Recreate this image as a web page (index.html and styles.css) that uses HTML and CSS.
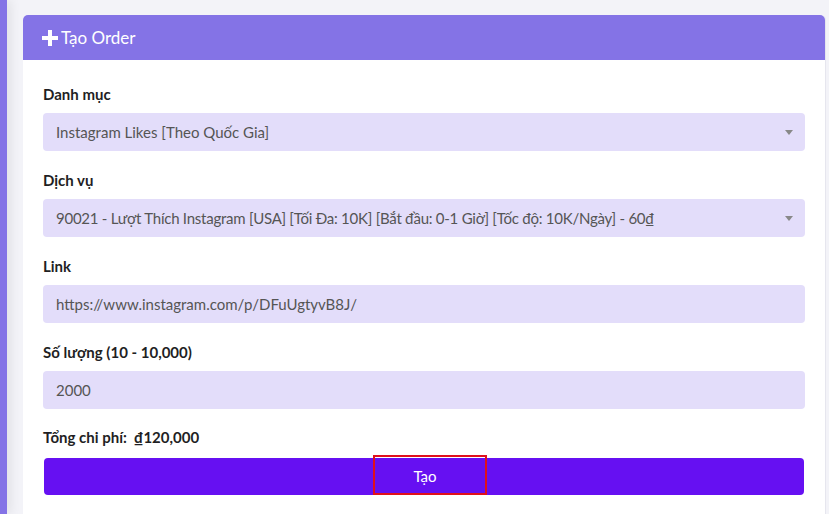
FILE: index.html
```html
<!DOCTYPE html>
<html>
	<head>
		<meta charset="utf-8">
		<title>Tạo Order</title>
		<link rel="stylesheet" href="styles.css">
	</head>
	<body>
		<div class="wrap">
			<div class="sidebar"></div>
			<div class="main">
				<div class="card">
					<div class="card-head">
						<svg class="plus" width="16" height="16" viewBox="0 0 16 16"><path d="M6 0h4v6h6v4h-6v6h-4v-6h-6v-4h6z" fill="#fff"/></svg>
						<span>Tạo Order</span>
					</div>
					<div class="card-body">
						<div class="group">
							<div class="label">Danh mục</div>
							<div class="control select">Instagram Likes [Theo Quốc Gia]<i class="caret"></i></div>
						</div>
						<div class="group">
							<div class="label">Dịch vụ</div>
							<div class="control select"><span class="long">90021 - Lượt Thích Instagram [USA] [Tối Đa: 10K] [Bắt đầu: 0-1 Giờ] [Tốc độ: 10K/Ngày] - 60₫</span><i class="caret"></i></div>
						</div>
						<div class="group">
							<div class="label">Link</div>
							<div class="control">https://www.instagram.com/p/DFuUgtyvB8J/</div>
						</div>
						<div class="group">
							<div class="label">Số lượng (10 - 10,000)</div>
							<div class="control">2000</div>
						</div>
						<div class="label total">Tổng chi phí:&nbsp; ₫120,000</div>
						<div class="btn"><span class="btn-text">Tạo</span></div>
					</div>
				</div>
			</div>
		</div>
	</body>
</html>
```

FILE: styles.css
```css
*{
	margin: 0;
	padding: 0;
	box-sizing: border-box;
}
body{
	background: #f3f3f8;
	font-family: "Lato", "Noto Sans", sans-serif;
	height: 514px;
	overflow: hidden;
}
.wrap{
	display: flex;
	height: 514px;
}
.sidebar{
	width: 7px;
	background: #8473e6;
	box-shadow: 2px 0 12px rgba(0,0,0,0.12);
	position: relative;
	z-index: 1;
}
.main{
	flex: 1;
	padding: 15px 3px 0 16px;
	border-top: 2px solid #fbfbfd;
	margin-top: -2px;
}
.card{
	background: #fff;
	border-radius: 5px 5px 0 0;
	border-right: 1px solid #e6e6ee;
	height: 100%;
}
.card-head{
	height: 45px;
	background: #8473e6;
	border-radius: 5px 5px 0 0;
	display: flex;
	align-items: center;
	padding-left: 19px;
	color: #fff;
	font-size: 17px;
}
.card-head .plus{
	margin-right: 3px;
}
.card-body{
	padding: 23px 20px 0 20px;
}
.group{
	margin-bottom: 18px;
}
.label{
	font-size: 15px;
	font-weight: bold;
	line-height: 22px;
	color: #1f1f24;
	margin-bottom: 8px;
}
.control{
	height: 38px;
	background: #e3ddfa;
	border-radius: 4px;
	padding: 0 13px;
	display: flex;
	align-items: center;
	font-size: 15px;
	color: #555;
	position: relative;
	white-space: nowrap;
}
.control .long{
	letter-spacing: -0.25px;
}
.caret{
	position: absolute;
	right: 12px;
	top: 17px;
	border-left: 4px solid transparent;
	border-right: 4px solid transparent;
	border-top: 5px solid #888;
}
.total{
	margin-top: -1px;
	margin-bottom: 10px;
}
.btn{
	height: 37px;
	margin: 0 1px;
	background: #6610f2;
	border-radius: 4px;
	display: flex;
	justify-content: center;
	align-items: flex-end;
}
.btn-text{
	display: flex;
	align-items: center;
	justify-content: center;
	width: 114px;
	height: 40px;
	margin-left: 12px;
	padding: 1px 10px 0 0;
	border: 2px solid #e0101c;
	color: #fff;
	font-size: 15px;
}
```
